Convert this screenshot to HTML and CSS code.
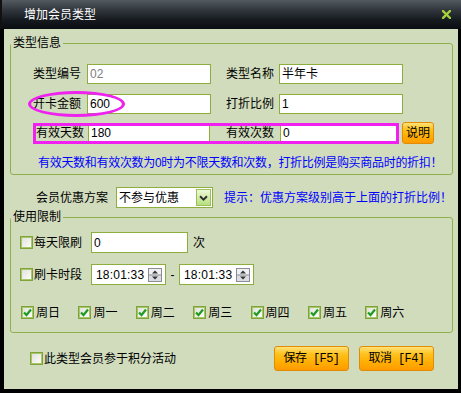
FILE: index.html
```html
<!DOCTYPE html>
<html lang="zh-CN">
<head>
    <meta charset="UTF-8">
    <title>增加会员类型</title>
    <link rel="stylesheet" href="styles.css">
</head>
<body>
    <div class="window">
        <div class="titlebar">
            <span class="title">增加会员类型</span>
            <svg class="close" width="9" height="9" viewBox="0 0 9 9">
                <path d="M1 1L8 8M8 1L1 8" stroke="#a6cf3c" stroke-width="2.4" stroke-linecap="square"/>
            </svg>
        </div>

        <div class="content">
            <fieldset class="group info">
                <legend>类型信息</legend>
                <div class="row">
                    <span class="lbl">类型编号</span>
                    <span class="field dim">02</span>
                    <span class="lbl lbl-right">类型名称</span>
                    <span class="field">半年卡</span>
                </div>
                <div class="row row-gap">
                    <span class="lbl">开卡金额</span>
                    <span class="field">600</span>
                    <span class="lbl lbl-right">打折比例</span>
                    <span class="field">1</span>
                    <span class="ellipse"></span>
                </div>
                <div class="row row-valid">
                    <div class="mark-box">
                        <span class="lbl">有效天数</span>
                        <span class="field f-days">180</span>
                        <span class="lbl lbl-count">有效次数</span>
                        <span class="field f-count">0</span>
                    </div>
                    <span class="btn btn-note">说明</span>
                </div>
                <p class="hint hint-info">有效天数和有效次数为0时为不限天数和次数，打折比例是购买商品时的折扣！</p>
            </fieldset>

            <div class="discount">
                <span class="lbl-wide">会员优惠方案</span>
                <span class="select">
                    <span class="select-text">不参与优惠</span>
                    <span class="select-btn">
                        <svg width="15" height="16" viewBox="0 0 15 16">
                            <path d="M3.5 6L7.5 10L11.5 6" fill="none" stroke="#2d2d2d" stroke-width="2.2"/>
                        </svg>
                    </span>
                </span>
                <span class="hint hint-tip">提示：优惠方案级别高于上面的打折比例！</span>
            </div>

            <fieldset class="group limit">
                <legend>使用限制</legend>
                <div class="lrow">
                    <span class="check"></span>
                    <span class="check-text">每天限刷</span>
                    <span class="field f-times">0</span>
                    <span class="unit">次</span>
                </div>
                <div class="lrow lrow-time">
                    <span class="check"></span>
                    <span class="check-text">刷卡时段</span>
                    <span class="field f-time">18:01:33
                        <svg class="spin" width="14" height="14" viewBox="0 0 14 14">
                            <rect x="0.5" y="0.5" width="13" height="13" fill="#dcdce4" stroke="#8c8c94"/>
                            <rect x="1" y="1" width="12" height="6" fill="#f0f0f4"/>
                            <line x1="1" y1="7" x2="13" y2="7" stroke="#8c8c94"/>
                            <path d="M4 5.5L7 2.5L10 5.5Z" fill="#333"/>
                            <path d="M4 8.5L7 11.5L10 8.5Z" fill="#333"/>
                        </svg>
                    </span>
                    <span class="dash">-</span>
                    <span class="field f-time">18:01:33
                        <svg class="spin" width="14" height="14" viewBox="0 0 14 14">
                            <rect x="0.5" y="0.5" width="13" height="13" fill="#dcdce4" stroke="#8c8c94"/>
                            <rect x="1" y="1" width="12" height="6" fill="#f0f0f4"/>
                            <line x1="1" y1="7" x2="13" y2="7" stroke="#8c8c94"/>
                            <path d="M4 5.5L7 2.5L10 5.5Z" fill="#333"/>
                            <path d="M4 8.5L7 11.5L10 8.5Z" fill="#333"/>
                        </svg>
                    </span>
                </div>
                <div class="days">
                    <span class="day"><span class="check on"><svg width="11" height="11" viewBox="0 0 11 11"><path d="M2 5.5L4.5 8L9 2.5" fill="none" stroke="#1f9c22" stroke-width="2.2"/></svg></span>周日</span>
                    <span class="day"><span class="check on"><svg width="11" height="11" viewBox="0 0 11 11"><path d="M2 5.5L4.5 8L9 2.5" fill="none" stroke="#1f9c22" stroke-width="2.2"/></svg></span>周一</span>
                    <span class="day"><span class="check on"><svg width="11" height="11" viewBox="0 0 11 11"><path d="M2 5.5L4.5 8L9 2.5" fill="none" stroke="#1f9c22" stroke-width="2.2"/></svg></span>周二</span>
                    <span class="day"><span class="check on"><svg width="11" height="11" viewBox="0 0 11 11"><path d="M2 5.5L4.5 8L9 2.5" fill="none" stroke="#1f9c22" stroke-width="2.2"/></svg></span>周三</span>
                    <span class="day"><span class="check on"><svg width="11" height="11" viewBox="0 0 11 11"><path d="M2 5.5L4.5 8L9 2.5" fill="none" stroke="#1f9c22" stroke-width="2.2"/></svg></span>周四</span>
                    <span class="day"><span class="check on"><svg width="11" height="11" viewBox="0 0 11 11"><path d="M2 5.5L4.5 8L9 2.5" fill="none" stroke="#1f9c22" stroke-width="2.2"/></svg></span>周五</span>
                    <span class="day"><span class="check on"><svg width="11" height="11" viewBox="0 0 11 11"><path d="M2 5.5L4.5 8L9 2.5" fill="none" stroke="#1f9c22" stroke-width="2.2"/></svg></span>周六</span>
                </div>
            </fieldset>

            <div class="footer">
                <span class="check"></span>
                <span class="check-text">此类型会员参于积分活动</span>
                <span class="btn btn-save">保存 [F5]</span>
                <span class="btn btn-cancel">取消 [F4]</span>
            </div>
        </div>
    </div>
</body>
</html>
```

FILE: styles.css
```css
* {
    margin: 0;
    padding: 0;
    box-sizing: border-box;
}

body {
    background: #000;
    font-family: "Liberation Sans", "Noto Sans CJK SC", sans-serif;
    font-size: 12px;
    line-height: 14px;
    color: #000;
}

.window {
    width: 461px;
    height: 393px;
    background: #000;
    display: flex;
    flex-direction: column;
}

.titlebar {
    height: 29px;
    flex: none;
    display: flex;
    align-items: center;
    justify-content: space-between;
    padding: 0 10px 0 22px;
    background: linear-gradient(#535a60 0%, #30363c 35%, #151a1f 70%, #0a0d10 100%);
    border-left: 2px solid #111;
}

.title {
    color: #fff;
    font-size: 12px;
    padding-top: 1px;
}

.close {
    display: block;
}

.content {
    flex: 1;
    margin: 0 3px 4px 4px;
    background: #d1dcbd;
}

/* 分组框 */
.group {
    margin: 0 5px 0 6px;
    border: 1px solid #8fb14b;
    border-radius: 3px;
    padding: 0 0 3px 0;
}

.group legend {
    padding: 0 2px;
    line-height: 14px;
}

.info {
    margin-top: 7px;
    padding-top: 14px;
}

.row {
    position: relative;
    display: flex;
    align-items: center;
    height: 20px;
    margin-left: 22px;
}

.row-gap {
    margin-top: 10px;
}

.lbl {
    width: 48px;
    flex: none;
}

.lbl-right {
    margin-left: 15px;
}

.row .field {
    margin-left: 6px;
}

.row .lbl-right + .field {
    margin-left: 5px;
}

.field {
    display: flex;
    align-items: center;
    width: 124px;
    height: 20px;
    flex: none;
    padding-left: 2px;
    border: 1px solid #8dae3e;
    background: #fff;
}

.dim {
    color: #808080;
}

.ellipse {
    position: absolute;
    left: -5px;
    top: -3px;
    width: 97px;
    height: 26px;
    border: 3px solid #ee22ee;
    border-radius: 50%;
}

.row-valid {
    margin-top: 8px;
    height: 22px;
}

.mark-box {
    display: flex;
    align-items: center;
    width: 366px;
    height: 21px;
    border: 3px solid #f020f0;
}

.mark-box .field {
    height: 15px;
    border-top: none;
    border-bottom: none;
    margin-left: 0;
}

.f-days {
    width: 122px;
    margin-left: 4px !important;
}

.lbl-count {
    width: 70px;
    padding-left: 16px;
}

.f-count {
    width: 116px;
    border-right: none !important;
}

.btn {
    display: flex;
    align-items: center;
    justify-content: center;
    border: 1px solid #e08c06;
    border-radius: 3px;
    background: linear-gradient(#ffe27a 0%, #ffc21e 30%, #ffac00 70%, #ff9a00 100%);
    flex: none;
}

.btn-note {
    width: 32px;
    height: 22px;
    margin-left: 3px;
}

.hint {
    color: #0000ff;
}

.hint-info {
    margin: 11px 0 0 27px;
    line-height: 16px;
    letter-spacing: -0.3px;
    white-space: nowrap;
}

/* 会员优惠方案 */
.discount {
    display: flex;
    align-items: center;
    height: 21px;
    margin: 12px 0 0 32px;
}

.lbl-wide {
    width: 72px;
}

.select {
    display: flex;
    align-items: center;
    justify-content: space-between;
    width: 97px;
    height: 21px;
    margin-left: 8px;
    padding: 1px 1px 1px 2px;
    border: 1px solid #8dae3e;
    background: #fff;
}

.select-btn {
    display: flex;
    align-items: center;
    justify-content: center;
    width: 15px;
    height: 17px;
    border: 1px solid #9cbf5a;
    background: linear-gradient(#eef8d8, #b6e07c);
}

.hint-tip {
    margin-left: 11px;
    white-space: nowrap;
}

/* 使用限制 */
.limit {
    margin-top: 2px;
    padding-top: 8px;
    padding-bottom: 11px;
}

.lrow {
    display: flex;
    align-items: center;
    height: 21px;
    margin-left: 9px;
}

.lrow-time {
    margin-top: 11px;
}

.check {
    display: flex;
    align-items: center;
    justify-content: center;
    width: 13px;
    height: 13px;
    flex: none;
    border: 1px solid #7fa23a;
    box-shadow: inset 0 0 0 1px #a8c768;
    background: linear-gradient(135deg, #dedfd8, #ffffff);
}

.check-text {
    margin-left: 1px;
    width: 48px;
}

.lrow .field {
    height: 21px;
    margin-left: 9px;
}

.f-times {
    width: 97px !important;
}

.unit {
    margin-left: 5px;
}

.f-time {
    width: 75px !important;
    padding-left: 4px;
    justify-content: space-between;
    padding-right: 3px;
    letter-spacing: 0.2px;
}

.spin {
    display: block;
}

.dash {
    width: 13px;
    text-align: center;
}

.lrow .dash + .field {
    margin-left: 0;
}

.days {
    display: grid;
    grid-template-columns: repeat(7, 57.4px);
    height: 17px;
    margin: 19px 0 0 10px;
    align-items: center;
}

.day {
    display: flex;
    align-items: center;
    gap: 2px;
}

/* 底部 */
.footer {
    display: flex;
    align-items: center;
    height: 25px;
    margin: 13px 0 0 26px;
}

.footer .check-text {
    width: auto;
    flex: 1;
}

.btn-save,
.btn-cancel {
    width: 75px;
    height: 25px;
    font-family: "Liberation Mono", "Noto Sans CJK SC", monospace;
    letter-spacing: -0.6px;
}

.btn-save {
    margin-right: 10px;
}

.btn-cancel {
    margin-right: 24px;
}
```
